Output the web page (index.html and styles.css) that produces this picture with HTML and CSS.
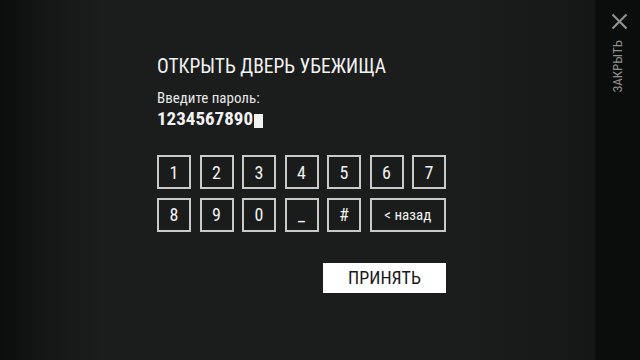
FILE: index.html
```html
<!DOCTYPE html>
<html lang="ru">
<head>
  <meta charset="UTF-8">
  <title>Открыть дверь убежища</title>
  <link rel="stylesheet" href="styles.css">
</head>
<body>

  <div class="screen">
    <div class="main">
      <div class="panel">
        <h2 class="title">ОТКРЫТЬ ДВЕРЬ УБЕЖИЩА</h2>
        <div class="label">Введите пароль:</div>
        <div class="code">1234567890<span class="cursor"></span></div>

        <div class="keypad">
          <button class="key">1</button>
          <button class="key">2</button>
          <button class="key">3</button>
          <button class="key">4</button>
          <button class="key">5</button>
          <button class="key">6</button>
          <button class="key">7</button>
          <button class="key">8</button>
          <button class="key">9</button>
          <button class="key">0</button>
          <button class="key">_</button>
          <button class="key">#</button>
          <button class="key key-back">&lt; назад</button>
        </div>

        <div class="actions">
          <button class="accept-button">ПРИНЯТЬ</button>
        </div>
      </div>
    </div>

    <div class="sidebar">
      <svg class="close-icon" width="17" height="17" viewBox="0 0 17 17">
        <path d="M1.5 1.5 L15.5 15.5 M15.5 1.5 L1.5 15.5" stroke="#8f9090" stroke-width="2.2" fill="none"/>
      </svg>
      <div class="close-label">ЗАКРЫТЬ</div>
    </div>
  </div>

</body>
</html>
```

FILE: styles.css
```css
body {
  margin: 0;
  font-family: 'Roboto Condensed', 'Roboto', 'Liberation Sans', sans-serif;
  font-stretch: 80%;
  background-color: #1b1d1d;
  height: 100vh;
  overflow: hidden;
}

.screen {
  display: flex;
  height: 100vh;
}

.main {
  flex: 1;
  background: linear-gradient(to right, #0b0d0d 0px, #161818 50px, #1b1d1d 110px, #1b1d1d 470px, #151717 595px);
}

.panel {
  width: 289px;
  padding: 55px 0 0 157px;
  color: #f2f2f2;
}

.title {
  margin: 0;
  font-size: 19.5px;
  font-weight: normal;
  line-height: 23px;
}

.label {
  margin-top: 11px;
  font-size: 15px;
  line-height: 18px;
  color: #e8e8e8;
}

.code {
  margin-top: 1px;
  font-size: 19px;
  font-weight: bold;
  line-height: 22px;
  display: flex;
  align-items: center;
}

.cursor {
  display: inline-block;
  width: 9px;
  height: 14px;
  margin: 3px 0 0 1px;
  background-color: #f2f2f2;
}

.keypad {
  display: grid;
  grid-template-columns: repeat(7, 34px);
  grid-auto-rows: 34px;
  gap: 8.5px;
  margin-top: 25px;
}

.key {
  background-color: #1a1c1c;
  border: 2px solid #c9c9c9;
  color: #f2f2f2;
  font-family: inherit;
  font-stretch: inherit;
  font-size: 18px;
  padding: 0;
  cursor: pointer;
}

.key-back {
  grid-column: span 2;
  font-size: 15px;
}

.actions {
  display: flex;
  justify-content: flex-end;
  margin-top: 31px;
}

.accept-button {
  width: 123px;
  height: 30px;
  background-color: #ffffff;
  border: none;
  color: #1a1a1a;
  font-family: inherit;
  font-stretch: inherit;
  font-size: 18px;
  padding: 0;
  cursor: pointer;
}

.sidebar {
  width: 45px;
  background-color: #0b0c0c;
  display: flex;
  flex-direction: column;
  align-items: center;
  padding-top: 13px;
}

.close-icon {
  margin-left: 3px;
}

.close-label {
  margin-top: 10px;
  writing-mode: vertical-rl;
  transform: rotate(180deg);
  font-size: 13px;
  color: #8f9090;
}
```
